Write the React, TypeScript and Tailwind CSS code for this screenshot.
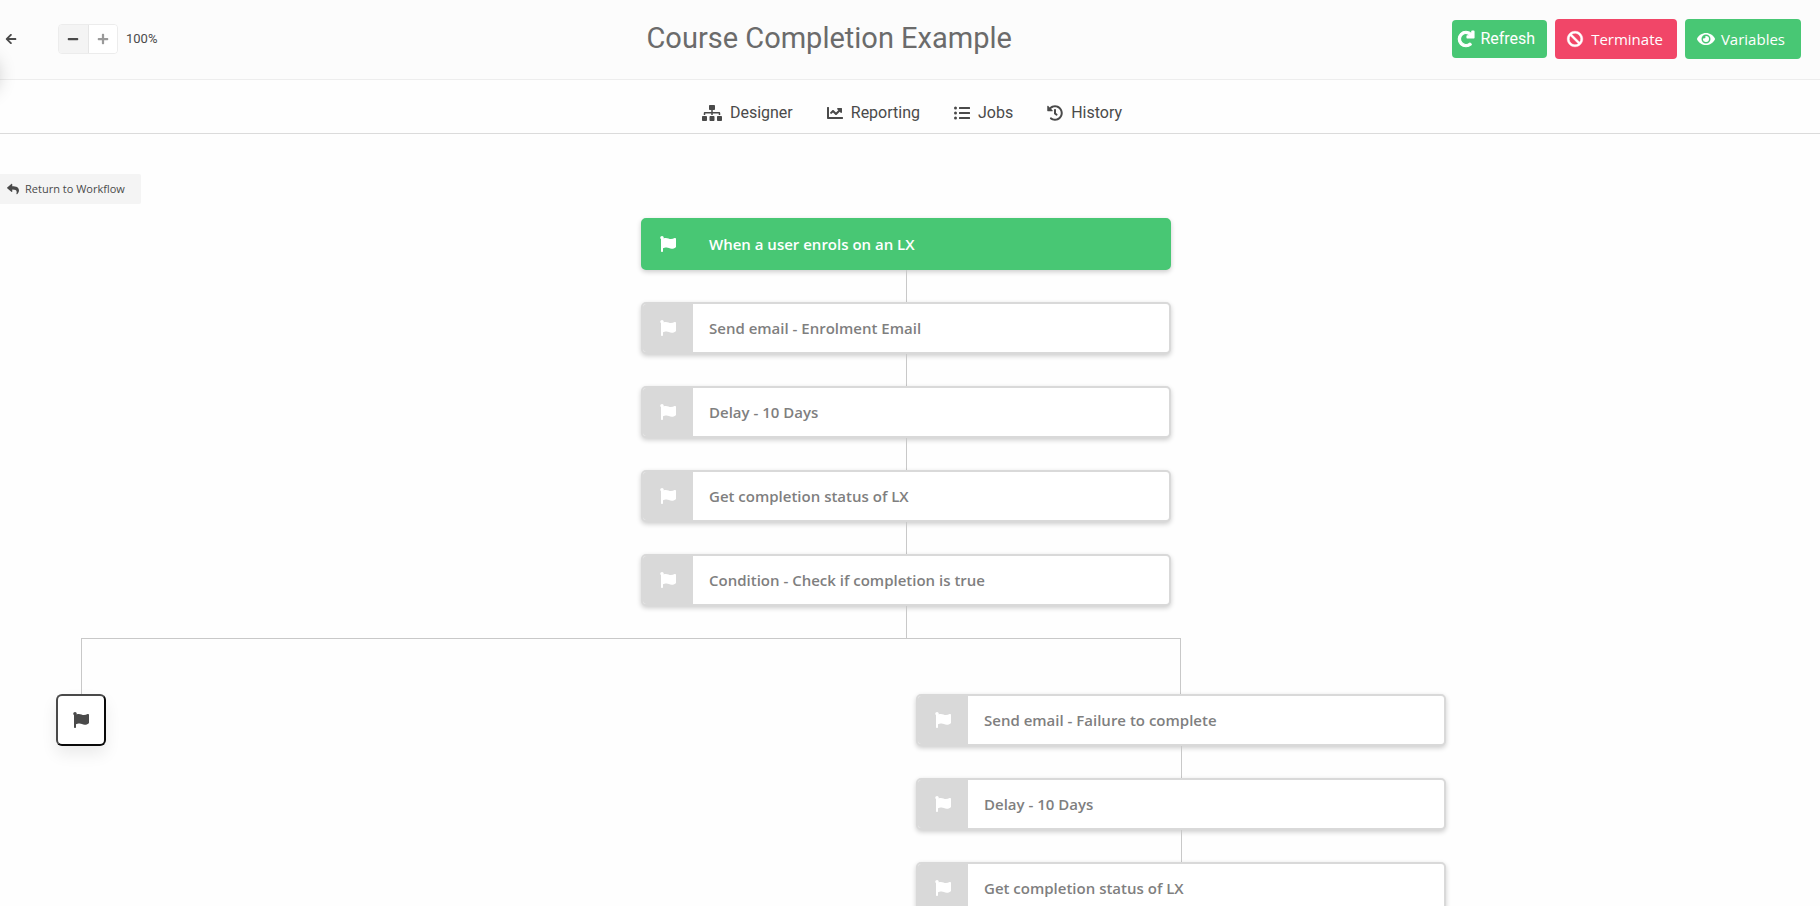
import type { ReactNode } from "react";
import {
  FaArrowLeft,
  FaBan,
  FaChartLine,
  FaEye,
  FaFlag,
  FaHistory,
  FaListUl,
  FaMinus,
  FaPlus,
  FaRedo,
  FaReply,
  FaSitemap,
} from "react-icons/fa";
import clsx from "clsx";

const tabs = [
  { label: "Designer", icon: <FaSitemap className="h-4 w-5" /> },
  { label: "Reporting", icon: <FaChartLine className="size-4" /> },
  { label: "Jobs", icon: <FaListUl className="size-4" /> },
  { label: "History", icon: <FaHistory className="size-4" /> },
];

const rootSteps = [
  "Send email - Enrolment Email",
  "Delay - 10 Days",
  "Get completion status of LX",
  "Condition - Check if completion is true",
];

const failureSteps = [
  "Send email - Failure to complete",
  "Delay - 10 Days",
  "Get completion status of LX",
];

function StepNode({ label, active = false }: { label: string; active?: boolean }) {
  return (
    <button
      type="button"
      className={clsx(
        "flex h-[52px] w-[530px] items-stretch overflow-hidden rounded-[5px] border-2 text-left text-[15px] font-semibold shadow-[0_2px_5px_rgba(0,0,0,0.2)]",
        active
          ? "border-[#48c774] bg-[#48c774] text-white"
          : "border-[#d9d9d9] bg-white text-[#7f7f7f]"
      )}
    >
      <span
        className={clsx(
          "flex w-[50px] items-center justify-center text-white",
          !active && "bg-[#d9d9d9]"
        )}
      >
        <FaFlag className="size-4" />
      </span>
      <span className="flex items-center pl-4">{label}</span>
    </button>
  );
}

function Connector() {
  return <div className="h-8 w-px bg-[#c8c8c8]" />;
}

function Chain({ children }: { children: ReactNode }) {
  return <div className="flex w-[530px] flex-col items-center">{children}</div>;
}

export default function App() {
  return (
    <div className="relative flex h-screen flex-col overflow-hidden bg-[#fefefe] font-['Roboto',sans-serif] text-[#4a4a4a]">
      {/* Shadow cast by the collapsed side menu and its toggle */}
      <div
        aria-hidden
        className="pointer-events-none absolute top-[59px] -left-9 size-8 rounded-full shadow-[0_0_20px_rgba(0,0,0,0.3)]"
      />

      <header className="flex h-20 shrink-0 items-center border-b border-[#ededed] bg-[#fcfcfc] pr-[19px] pb-px">
        <div className="flex w-[206px] items-center pl-[5px]">
          <button type="button" aria-label="Back" className="mr-10 w-[13px]">
            <FaArrowLeft className="size-3" />
          </button>
          <div className="flex h-[30px] w-[60px] overflow-hidden rounded-[4px] border border-[#ececec]">
            <button
              type="button"
              aria-label="Zoom out"
              className="flex flex-1 items-center justify-center bg-[#f4f4f4]"
            >
              <FaMinus className="size-3" />
            </button>
            <button
              type="button"
              aria-label="Zoom in"
              className="flex flex-1 items-center justify-center border-l border-[#e6e6e6] bg-white text-[#9a9a9a]"
            >
              <FaPlus className="size-3" />
            </button>
          </div>
          <span className="ml-2 text-[13px]">100%</span>
        </div>

        <h1 className="flex-1 pb-[2px] text-center text-[29px] leading-9 text-[#6b6b6b]">
          Course Completion Example
        </h1>

        <div className="flex items-center gap-2 text-[15px] text-white">
          <button
            type="button"
            className="flex h-[38px] items-center gap-[6px] rounded-[4px] bg-[#48c774] pr-3 pl-[6px] text-base"
          >
            <FaRedo className="size-4 overflow-visible stroke-[36]" />
            Refresh
          </button>
          <button
            type="button"
            className="flex h-10 items-center gap-2 rounded-[4px] bg-[#f14668] pr-[14px] pl-3 font-['Open_Sans',sans-serif]"
          >
            <FaBan className="size-4 overflow-visible stroke-[16]" />
            Terminate
          </button>
          <button
            type="button"
            className="flex h-10 items-center gap-[6px] rounded-[4px] bg-[#48c774] pr-4 pl-3 font-['Open_Sans',sans-serif]"
          >
            <FaEye className="size-[18px]" />
            Variables
          </button>
        </div>
      </header>

      <nav className="flex h-[54px] shrink-0 items-center justify-center gap-[34px] border-b border-[#dbdbdb] pt-[14px] pb-px pl-1">
        {tabs.map((tab) => (
          <a key={tab.label} href="#" className="flex items-center gap-2 text-base">
            {tab.icon}
            {tab.label}
          </a>
        ))}
      </nav>

      <main className="min-h-0 flex-1 overflow-hidden pt-10 font-['Open_Sans',sans-serif]">
        <button
          type="button"
          className="flex h-[30px] items-center gap-[6px] rounded-r-[2px] bg-[#f4f4f4] pr-4 pl-[7px] text-[11px]"
        >
          <FaReply className="size-3" />
          Return to Workflow
        </button>

        <section aria-label="Workflow" className="mt-[14px] w-[1446px]">
          <div className="pl-[641px]">
            <Chain>
              <StepNode label="When a user enrols on an LX" active />
              {rootSteps.map((label) => (
                <div key={label} className="flex flex-col items-center">
                  <Connector />
                  <StepNode label={label} />
                </div>
              ))}
              <Connector />
            </Chain>
          </div>

          {/* Branch rail joining both outcomes of the condition */}
          <div className="mr-[265px] ml-[81px] h-14 border border-b-0 border-[#c8c8c8]" />

          <div className="flex items-start justify-between pl-14">
            <button
              type="button"
              aria-label="Completed branch"
              className="flex h-[52px] w-[50px] items-center justify-center rounded-[6px] border-2 border-t-[#4a4a4a] border-r-[#0a0a0a] border-b-[#0a0a0a] border-l-[#4a4a4a] bg-white shadow-[0_8px_16px_rgba(0,0,0,0.08)]"
            >
              <FaFlag className="size-4" />
            </button>
            <Chain>
              {failureSteps.map((label, i) => (
                <div key={label} className="flex flex-col items-center">
                  {i > 0 && <Connector />}
                  <StepNode label={label} />
                </div>
              ))}
            </Chain>
          </div>
        </section>
      </main>
    </div>
  );
}
